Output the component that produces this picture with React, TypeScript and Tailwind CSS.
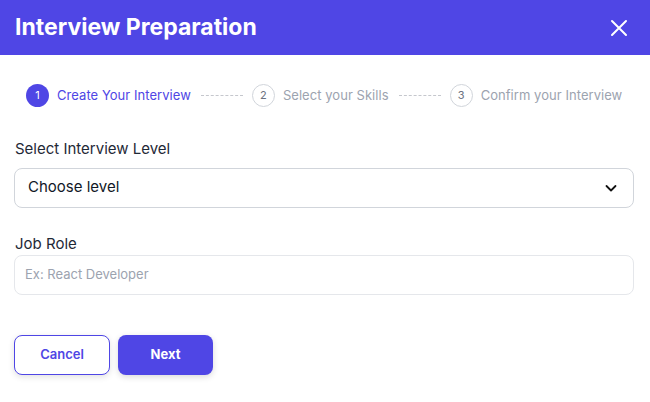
import React from "react";

const font = { fontFamily: "Inter, 'Noto Sans', sans-serif" };

function Dashes() {
  return <div className="ml-[10px] mr-[9px] w-[42px] border-t border-dashed border-[#c5c7cd]" />;
}

function Step({ n, label, active }: { n: number; label: string; active?: boolean }) {
  return (
    <div className="flex items-center">
      <div
        className={
          active
            ? "flex h-[23px] w-[23px] items-center justify-center rounded-full bg-[#4f46e5] text-[11px] text-white"
            : "flex h-[23px] w-[23px] items-center justify-center rounded-full border border-[#d1d5db] text-[11px] text-[#6b7280]"
        }
      >
        {n}
      </div>
      <span
        className={
          active
            ? "ml-[8px] text-[13px] tracking-[0.05px] text-[#4f46e5]"
            : "ml-[8px] text-[13px] tracking-[0.05px] text-[#9ca3af]"
        }
      >
        {label}
      </span>
    </div>
  );
}

export default function App() {
  return (
    <div className="h-[402px] w-[650px] bg-white" style={font}>
      <div className="flex h-[55px] items-center justify-between bg-[#4f46e5] pl-[15px] pr-[22px]">
        <h1 className="text-[23px] font-bold text-white">Interview Preparation</h1>
        <svg width="18" height="18" viewBox="0 0 18 18" fill="none" stroke="white" strokeWidth="2" strokeLinecap="round">
          <path d="M2 2l14 14M16 2L2 16" />
        </svg>
      </div>

      <div className="flex items-center pl-[26px] pt-[29px]">
        <Step n={1} label="Create Your Interview" active />
        <Dashes />
        <Step n={2} label="Select your Skills" />
        <Dashes />
        <Step n={3} label="Confirm your Interview" />
      </div>

      <div className="pl-[14px] pr-[16px] pt-[31px]">
        <div className="pl-[1px] text-[15px] text-[#1f2937]">Select Interview Level</div>
        <div className="mt-[7px] flex h-[40px] items-center justify-between rounded-[8px] border border-[#d1d5db] pl-[13px] pr-[15px]">
          <span className="text-[15px] text-[#111827]">Choose level</span>
          <svg width="14" height="14" viewBox="0 0 14 14" fill="none" stroke="#111" strokeWidth="1.8" strokeLinecap="round" strokeLinejoin="round">
            <path d="M2.5 5l4.5 4.5L11.5 5" />
          </svg>
        </div>

        <div className="mt-[25px] pl-[1px] text-[15px] text-[#1f2937]">Job Role</div>
        <div className="flex h-[40px] items-center rounded-[8px] border border-[#e5e7eb] pl-[10px]">
          <span className="text-[13px] text-[#9ca3af]">Ex: React Developer</span>
        </div>

        <div className="mt-[40px] flex gap-[8px]">
          <button className="h-[40px] w-[96px] rounded-[8px] border border-[#4f46e5] bg-white text-[13px] font-semibold text-[#4f46e5] shadow-[0_2px_6px_rgba(0,0,0,0.12)]">
            Cancel
          </button>
          <button className="h-[40px] w-[95px] rounded-[8px] bg-[#4f46e5] text-[13px] font-bold text-white shadow-[0_2px_6px_rgba(0,0,0,0.15)]">
            Next
          </button>
        </div>
      </div>
    </div>
  );
}
